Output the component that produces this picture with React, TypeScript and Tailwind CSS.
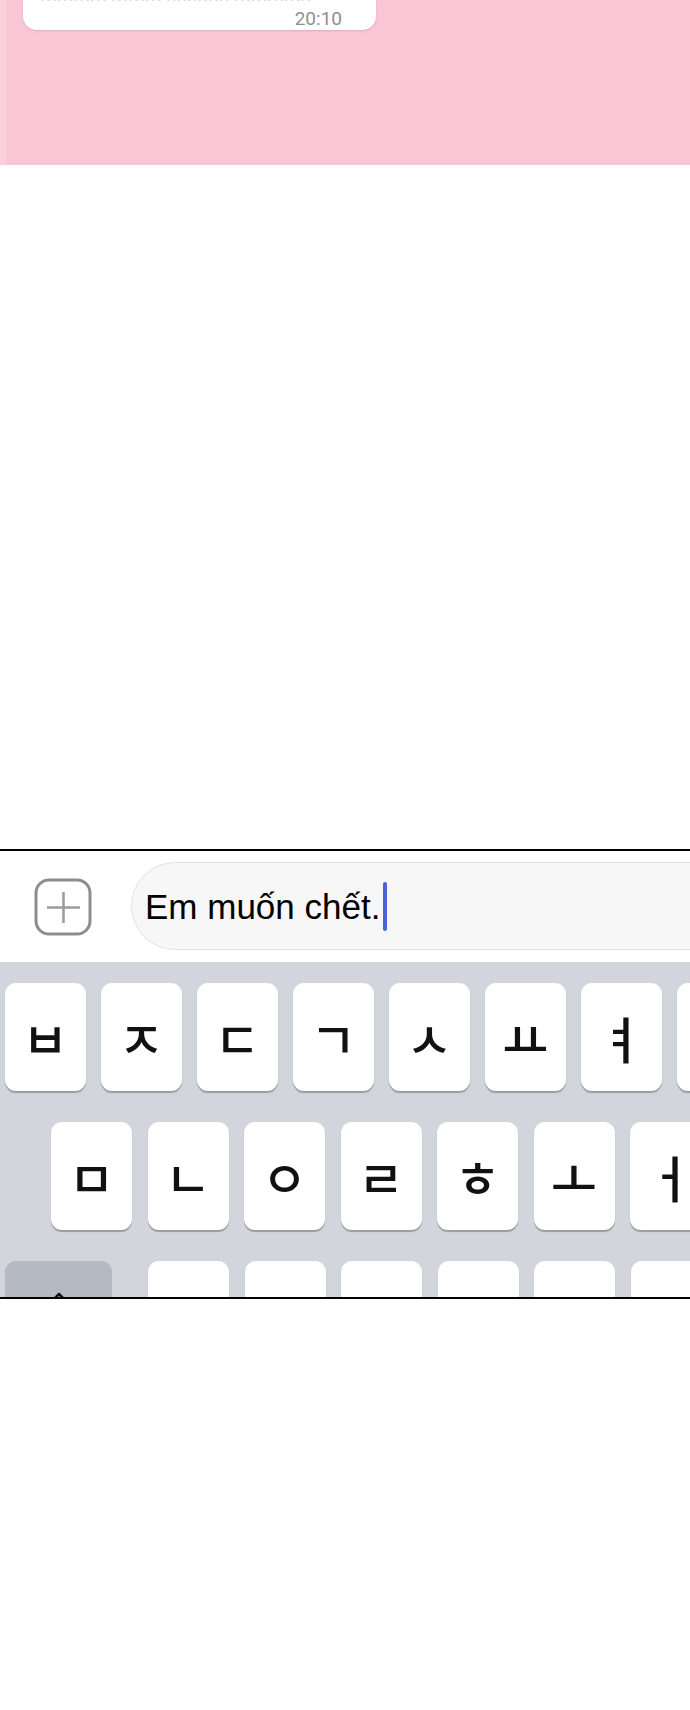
import React from "react";

const row1 = ["ㅂ", "ㅈ", "ㄷ", "ㄱ", "ㅅ", "ㅛ", "ㅕ", "ㅑ"];
const row2 = ["ㅁ", "ㄴ", "ㅇ", "ㄹ", "ㅎ", "ㅗ", "ㅓ"];
const row3 = ["ㅋ", "ㅌ", "ㅊ", "ㅍ", "ㅠ", "ㅜ"];

const jamoFont = {
  fontFamily: '"Noto Sans CJK KR", "Noto Sans", sans-serif',
};

function Key({ ch, w }: { ch: string; w: string }) {
  return (
    <div
      className={`${w} h-[108px] shrink-0 rounded-[11px] bg-white shadow-[0_2px_1px_#9a9ca2] flex items-center justify-center text-[50px] font-medium leading-none text-[#111]`}
      style={jamoFont}
    >
      {ch}
    </div>
  );
}

export default function App() {
  return (
    <div
      className="w-[690px] h-[1710px] bg-white flex flex-col overflow-hidden"
      style={{ fontFamily: '"Liberation Sans", Arial, sans-serif' }}
    >
      {/* pink chat panel */}
      <div className="h-[165px] shrink-0 bg-[#fac6d6] flex">
        <div className="w-[6px] bg-[#fbd0dc]" />
        <div className="ml-[17px] w-[353px] h-[30px] bg-white rounded-b-[14px] shadow-[0_1px_2px_rgba(200,150,165,0.5)] flex flex-col overflow-hidden">
          <div className="h-[4px] overflow-hidden pl-[17px]">
            <div
              className="-mt-[15px] text-[19px] leading-[19px] text-[#d6d6d6]"
              style={{ fontFamily: "Roboto, sans-serif" }}
            >
              mmmm mmm nnnnnn mmmmn
            </div>
          </div>
          <div className="flex justify-end pr-[34px] pt-[5px]">
            <span
              className="text-[19px] leading-[20px] text-[#8f8f8f]"
              style={{ fontFamily: "Roboto, sans-serif" }}
            >
              20:10
            </span>
          </div>
        </div>
      </div>

      {/* white gap */}
      <div className="h-[684px] shrink-0 bg-white" />

      {/* top border of panel */}
      <div className="h-[2px] shrink-0 bg-black" />

      {/* input bar */}
      <div className="h-[111px] shrink-0 bg-white flex items-start pt-[11px] overflow-hidden">
        <div className="pl-[34px] pt-[16px] shrink-0">
          <svg width="58" height="58" viewBox="0 0 58 58">
            <rect
              x="2"
              y="2"
              width="54"
              height="54"
              rx="13"
              fill="none"
              stroke="#8d8d8d"
              strokeWidth="3"
            />
            <line x1="13" y1="29.5" x2="46" y2="29.5" stroke="#9a9a9a" strokeWidth="2.5" />
            <line x1="29.5" y1="14" x2="29.5" y2="45" stroke="#9a9a9a" strokeWidth="2.5" />
          </svg>
        </div>
        <div className="ml-[39px] w-[620px] shrink-0 h-[88px] rounded-l-[44px] border-[1.5px] border-[#e2e2e2] bg-[#f7f7f7] flex items-center pl-[13px]">
          <span className="text-[35px] leading-none text-black">
            Em muốn chết.
          </span>
          <span className="ml-[3px] w-[4px] h-[49px] rounded-[2px] bg-[#4b63d8]" />
        </div>
      </div>

      {/* keyboard */}
      <div className="h-[335px] shrink-0 bg-[#d2d5db] overflow-hidden pt-[21px] flex flex-col gap-[31px]">
        <div className="flex pl-[5px] gap-[15.5px]">
          {row1.map((c) => (
            <Key key={c} ch={c} w="w-[80.5px]" />
          ))}
        </div>
        <div className="flex pl-[51px] gap-[15.5px]">
          {row2.map((c) => (
            <Key key={c} ch={c} w="w-[81px]" />
          ))}
        </div>
        <div className="flex pl-[5px]">
          <div className="w-[107px] h-[108px] shrink-0 rounded-[11px] bg-[#b4b9c2] flex justify-center pt-[31px]">
            <svg width="32" height="30" viewBox="0 0 32 30">
              <path
                d="M16 2 L30 16 L22 16 L22 28 L10 28 L10 16 L2 16 Z"
                fill="none"
                stroke="#111"
                strokeWidth="2.5"
                strokeLinejoin="round"
              />
            </svg>
          </div>
          <div className="ml-[36px] flex gap-[15.5px]">
            {row3.map((c) => (
              <Key key={c} ch={c} w="w-[81px]" />
            ))}
          </div>
        </div>
      </div>

      {/* bottom border */}
      <div className="h-[2px] shrink-0 bg-black" />
      <div className="flex-1 bg-white" />
    </div>
  );
}
